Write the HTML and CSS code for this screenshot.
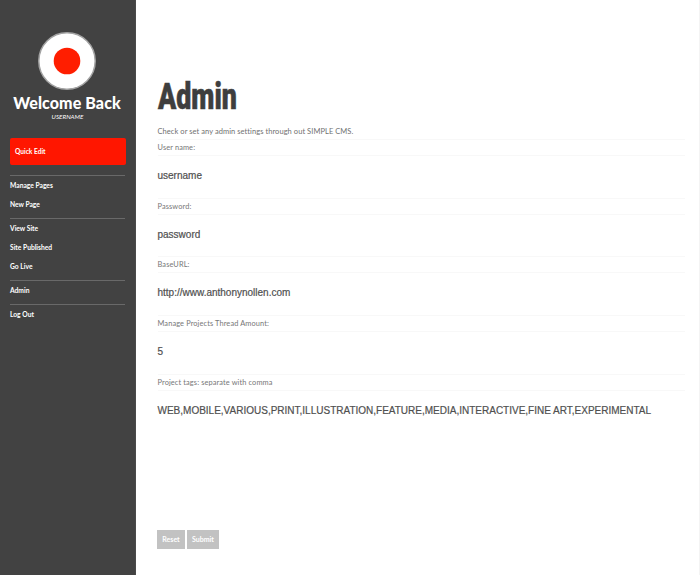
FILE: index.html
```html
<!DOCTYPE html>
<html lang="en">
<head>
<meta charset="utf-8">
<title>Admin</title>
<link rel="stylesheet" href="styles.css">
</head>
<body>
<aside class="sidebar">
  <svg class="avatar" viewBox="0 0 60 60"><circle cx="30" cy="30" r="28.2" fill="#fff" stroke="#a3a3a3" stroke-width="1.5"/><circle cx="30" cy="30" r="13.3" fill="#ff1e00"/></svg>
  <h2 class="welcome">Welcome Back</h2>
  <p class="user">USERNAME</p>
  <a class="quick">Quick Edit</a>
  <nav>
    <div class="group"><a>Manage Pages</a><a>New Page</a></div>
    <div class="group"><a>View Site</a><a>Site Published</a><a>Go Live</a></div>
    <div class="group"><a>Admin</a></div>
    <div class="group"><a>Log Out</a></div>
  </nav>
</aside>
<main class="content">
  <h1><span>Admin</span></h1>
  <p class="intro">Check or set any admin settings through out SIMPLE CMS.</p>
  <form>
    <div class="field"><label>User name:</label><div class="value">username</div></div>
    <div class="field"><label>Password:</label><div class="value">password</div></div>
    <div class="field"><label>BaseURL:</label><div class="value">http://www.anthonynollen.com</div></div>
    <div class="field"><label>Manage Projects Thread Amount:</label><div class="value">5</div></div>
    <div class="field"><label>Project tags: separate with comma</label><div class="value">WEB,MOBILE,VARIOUS,PRINT,ILLUSTRATION,FEATURE,MEDIA,INTERACTIVE,FINE ART,EXPERIMENTAL</div></div>
    <div class="actions"><button type="button" class="reset">Reset</button><button type="button" class="submit">Submit</button></div>
  </form>
</main>
</body>
</html>
```
FILE: styles.css
```css
* { box-sizing: border-box; }
body {
  margin: 0;
  height: 575px;
  display: flex;
  overflow: hidden;
  background: #fff;
  font-family: Lato, "Liberation Sans", sans-serif;
}
h1, h2, p { margin: 0; }
.sidebar {
  width: 136px;
  padding: 31px 10px 0;
  background: #424242;
  border-right: 1px solid #4a4a4a;
  color: #fff;
}
.avatar { display: block; width: 60px; height: 60px; margin: 0 auto 0 27px; }
.welcome {
  margin: 3px -10px 0;
  font-size: 16px;
  line-height: 18px;
  font-weight: 900;
  letter-spacing: .1px;
  text-align: center;
  white-space: nowrap;
  text-indent: -1px;
}
.user {
  padding-top: 1px;
  font-size: 6.3px;
  line-height: 8px;
  font-style: italic;
  text-align: center;
}
.quick {
  display: block;
  width: 116px;
  height: 27px;
  margin: 17px 0 10px 0;
  padding-left: 5px;
  border-radius: 2px;
  background: #ff1600;
  font-size: 6.6px;
  line-height: 27px;
  font-weight: 700;
}
.group {
  padding: 0 0 3.3px;
  border-top: 1px solid #696969;
}
.group a {
  display: block;
  height: 19.3px;
  font-size: 6.7px;
  line-height: 19.3px;
  font-weight: 700;
}
.content {
  flex: 1;
  padding: 75px 14px 0 21.5px;
  border-right: 1px solid #f4f4f4;
}
h1 {
  height: 42px;
  color: #3e3e3e;
  font: 900 37px/42px Roboto, sans-serif;
}
h1 span {
  display: inline-block;
  transform: translateY(.5px) scaleX(.725);
  transform-origin: 0 50%;
  -webkit-text-stroke: .6px #3e3e3e;
}
.intro {
  height: 22.4px;
  padding-top: 9px;
  color: #717171;
  font-size: 7.5px;
  line-height: 12px;
  letter-spacing: .06px;
}
.field { height: 58.55px; }
.field label {
  display: block;
  height: 17px;
  border: solid #f8f8f8;
  border-width: 1px 0;
  color: #777;
  font-size: 7.4px;
  line-height: 15px;
  letter-spacing: .12px;
}
.value {
  height: 39px;
  color: #505050;
  font: 10px/39px "Liberation Sans", sans-serif;
  -webkit-text-stroke: .2px #505050;
  white-space: nowrap;
}
.actions { display: flex; gap: 2px; margin: 98px 0 0 -.5px; }
.actions button {
  height: 19px;
  padding: 0;
  border: 0;
  background: #c2c2c2;
  color: #fff;
  font: 700 7px/19px Lato, sans-serif;
}
.reset { width: 28px; }
.submit { width: 32px; }
```
